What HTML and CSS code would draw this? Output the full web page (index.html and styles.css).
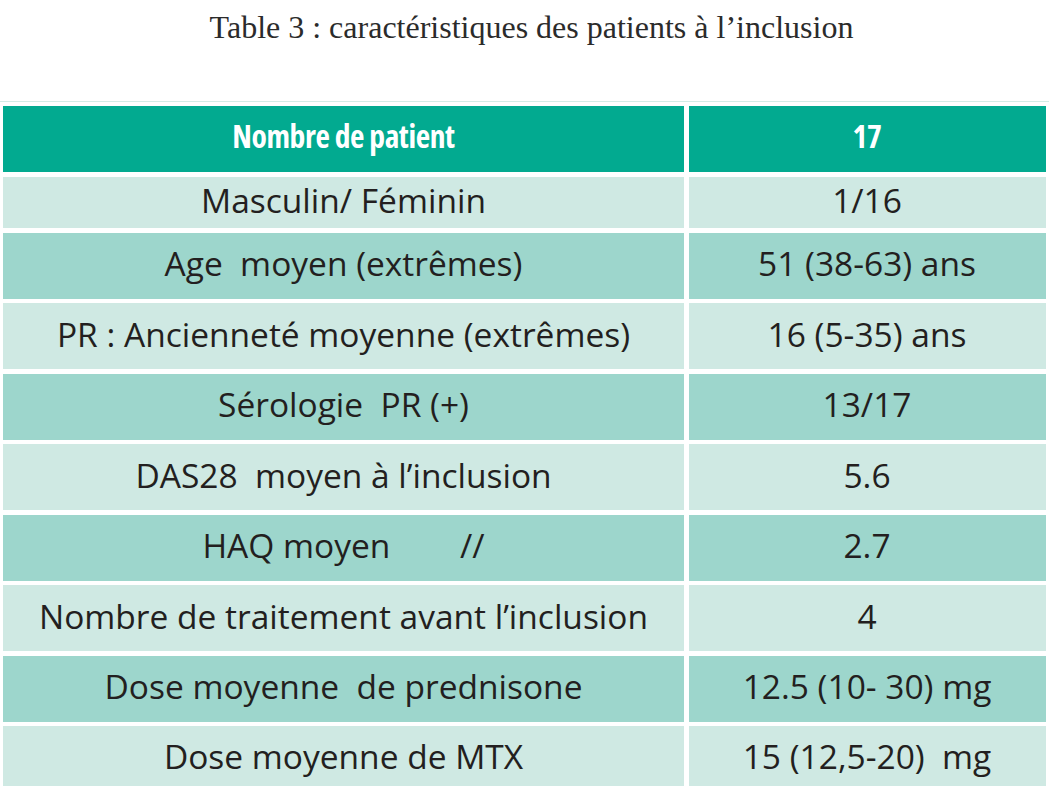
FILE: index.html
```html
<!DOCTYPE html>
<html lang="fr">
<head>
<meta charset="utf-8">
<title>Table 3</title>
<link rel="stylesheet" href="styles.css">
</head>
<body>
<div class="page">
  <h1 class="title">Table 3 : caractéristiques des patients à l’inclusion</h1>
  <div class="rule"></div>
  <div class="table">
    <div class="cell head">Nombre de patient</div>
    <div class="cell head">17</div>

    <div class="cell light">Masculin/ Féminin</div>
    <div class="cell light">1/16</div>

    <div class="cell dark">Age&nbsp; moyen (extrêmes)</div>
    <div class="cell dark">51 (38-63) ans</div>

    <div class="cell light">PR : Ancienneté moyenne (extrêmes)</div>
    <div class="cell light">16 (5-35) ans</div>

    <div class="cell dark">Sérologie&nbsp; PR (+)</div>
    <div class="cell dark">13/17</div>

    <div class="cell light">DAS28&nbsp; moyen à l’inclusion</div>
    <div class="cell light">5.6</div>

    <div class="cell dark">HAQ moyen&nbsp;&nbsp;&nbsp;&nbsp;&nbsp;&nbsp;&nbsp;&nbsp;//</div>
    <div class="cell dark">2.7</div>

    <div class="cell light">Nombre de traitement avant l’inclusion</div>
    <div class="cell light">4</div>

    <div class="cell dark">Dose moyenne&nbsp; de prednisone</div>
    <div class="cell dark">12.5 (10- 30) mg</div>

    <div class="cell light last">Dose moyenne de MTX</div>
    <div class="cell light last">15 (12,5-20)&nbsp; mg</div>
  </div>
</div>
</body>
</html>
```

FILE: styles.css
```css
html, body {
  margin: 0;
  padding: 0;
  background: #ffffff;
}

.page {
  width: 1049px;
  height: 796px;
  overflow: hidden;
}

.title {
  margin: 0;
  padding: 10px 0 0 14px;
  height: 101px;
  box-sizing: border-box;
  text-align: center;
  font-family: "Liberation Serif", "DejaVu Serif", serif;
  font-weight: normal;
  font-size: 32px;
  line-height: 34px;
  color: #2b2b2b;
}

.rule {
  height: 1px;
  background: #d3ece6;
  margin-bottom: 4px;
}

.table {
  display: grid;
  grid-template-columns: 681px 357px;
  grid-template-rows: 66px 51.5px repeat(7, 66px) 60px;
  column-gap: 4.5px;
  row-gap: 4.5px;
  margin-left: 3px;
}

.cell {
  display: flex;
  align-items: center;
  justify-content: center;
  box-sizing: border-box;
  padding-bottom: 5px;
  font-family: "Open Sans", "Noto Sans", sans-serif;
  font-size: 33.5px;
  color: #231f20;
  white-space: nowrap;
}

.head {
  background: #02aa90;
  color: #ffffff;
  padding-bottom: 8px;
  font-family: "Open Sans", "DejaVu Sans Condensed", sans-serif;
  font-weight: bold;
  font-stretch: 75%;
  font-size: 31.5px;
  letter-spacing: -0.4px;
}

.light {
  background: #cfe9e3;
}

.dark {
  background: #9dd6cc;
}

.last {
  padding-bottom: 0;
}
```
